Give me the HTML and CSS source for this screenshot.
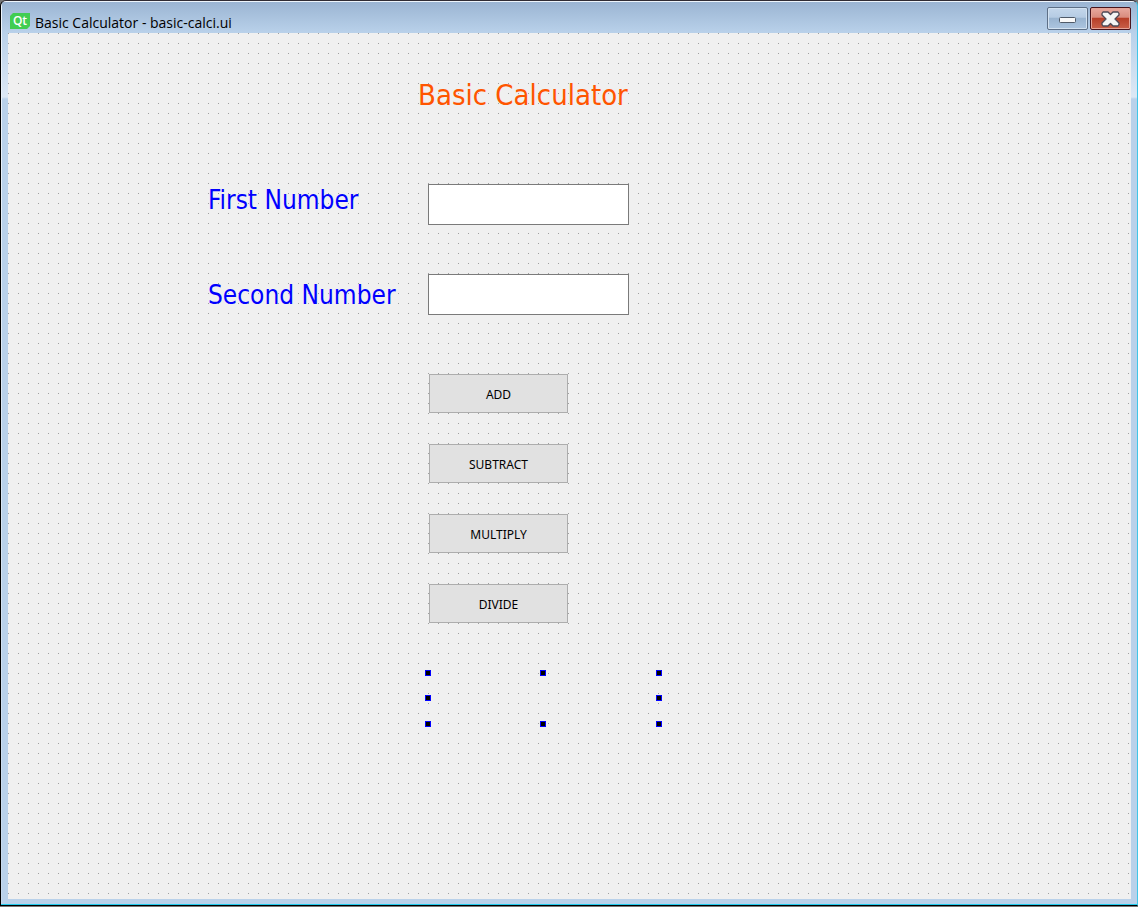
FILE: index.html
```html
<!DOCTYPE html>
<html lang="en">
<head>
<meta charset="utf-8">
<title>Basic Calculator - basic-calci.ui</title>
<link rel="stylesheet" href="styles.css">
</head>
<body>
<div class="window">
  <header class="titlebar">
    <span class="logo">Qt</span>
    <h1 class="caption">Basic Calculator - basic-calci.ui</h1>
    <div class="controls">
      <button class="control minimize" type="button" aria-label="Minimize">
        <svg width="17" height="6" viewBox="0 0 17 6"><rect x="0.500" y="0.500" width="16" height="5" rx="1" fill="#f8f8f8" stroke="#4f5a68"/></svg>
      </button>
      <button class="control close" type="button" aria-label="Close">
        <svg width="19" height="16" viewBox="0 0 19 16"><path d="M2 1H7L9.500 3.500L12 1H17L18 2.500V4L14 8L18 12V13.500L17 15H12L9.500 12.500L7 15H2L1 13.500V12L5 8L1 4V2.500Z" fill="#f4f4f4" stroke="#4d4855" stroke-width="1.300" stroke-linejoin="round"/></svg>
      </button>
    </div>
  </header>
  <main class="canvas">
    <form class="form">
      <h2 class="title">Basic Calculator</h2>
      <label class="label" for="first">First Number</label>
      <input class="field" id="first" type="text">
      <label class="label label-second" for="second">Second Number</label>
      <input class="field" id="second" type="text">
      <div class="actions">
        <button class="action" type="button">ADD</button>
        <button class="action" type="button">SUBTRACT</button>
        <button class="action" type="button">MULTIPLY</button>
        <button class="action" type="button">DIVIDE</button>
      </div>
      <output class="result">
        <i class="handle"></i><i class="handle"></i><i class="handle"></i>
        <i class="handle"></i><i class="handle handle-right"></i>
        <i class="handle"></i><i class="handle"></i><i class="handle"></i>
      </output>
    </form>
  </main>
</div>
</body>
</html>
```

FILE: styles.css
```css
* { box-sizing: border-box; }

body {
  margin: 0;
  background: #777;
  font-family: "Noto Sans", "Open Sans", sans-serif;
}

.window {
  display: flex;
  flex-direction: column;
  min-height: calc(100vh - 1px);
  padding: 0 6px 6px 7px;
  border: 1px solid #000;
  border-top-color: #302c34;
  border-right-color: #3fc5e8;
  border-radius: 6px 6px 0 0;
  background:
    linear-gradient(#22cbed, #22cbed) bottom / 100% 1px no-repeat,
    linear-gradient(#eef5fc, #c5d8ec) left / 1px 100% no-repeat,
    linear-gradient(#eef5fc, #eef5fc) top / 100% 1px no-repeat,
    linear-gradient(#9ab4d2, #b9d1ea 32px, #dce8f5 96px, #b9d1ea 98px);
}

.titlebar {
  display: flex;
  align-items: flex-start;
  height: 32px;
  padding-left: 2px;
}

.logo {
  width: 20px;
  height: 16px;
  margin-top: 12px;
  background: #41cd52;
  clip-path: polygon(3px 0, 100% 0, 100% 13px, 17px 100%, 0 100%, 0 3px);
  font: 600 12px/16px "Open Sans", sans-serif;
  color: #fff;
  text-align: center;
}

.caption {
  flex: 1;
  margin: 12px 0 0 5px;
  font: 14px/20px "Open Sans", "Noto Sans", sans-serif;
  color: #000;
}

.controls {
  display: flex;
  gap: 2px;
  margin-top: 6px;
}

.control {
  display: grid;
  place-items: center;
  width: 41px;
  height: 23px;
  padding: 0;
  border: 1px solid #5d6f86;
  border-radius: 2px;
  background: linear-gradient(#c4d7eb, #b5cbe3 45%, #98b3cf 46%, #adc6e0);
  box-shadow: inset 0 0 0 1px #d3e2f1;
}

.minimize svg { margin-top: 3px; }

.close {
  border-color: #48141c;
  background: linear-gradient(#e8a99f, #d98b7d 45%, #b63c25 46%, #c9614a);
  box-shadow: inset 0 0 0 1px #e5a497;
}

/* Designer grid: one dot every 10px in both directions. */
.canvas {
  flex: 1;
  background:
    linear-gradient(90deg, transparent 1px, #f0f0f0 1px) 0 0 / 10px 10px,
    linear-gradient(#a0a0a0 1px, #f0f0f0 1px) 0 0 / 10px 10px;
}

.form {
  display: grid;
  grid-template-columns: 220px 1fr;
  grid-template-rows: 151px 90px 100px auto auto;
  padding-left: 200px;
}

.title,
.label {
  font-family: "DejaVu Sans Condensed", "DejaVu Sans", sans-serif;
  font-weight: 400;
  line-height: 40px;
  white-space: nowrap;
}

.title {
  grid-column: 1 / -1;
  margin: 42px 0 0 210px;
  font-size: 29px;
  color: #ff5500;
}

.label {
  margin-top: -4px;
  font-size: 26px;
  color: #0000ff;
}

.label-second { margin-top: 1px; }

.field {
  width: 201px;
  height: 41px;
  padding: 0 6px;
  border: 1px solid #7a7a7a;
  border-radius: 0;
  background: #fff;
  font: inherit;
}

.actions {
  grid-column: 2;
  display: flex;
  flex-direction: column;
  align-items: flex-start;
  gap: 31px;
  padding-left: 1px;
}

.action {
  width: 139px;
  height: 39px;
  padding: 2px 0 0;
  border: 1px solid #adadad;
  border-radius: 0;
  background: #e1e1e1;
  font: 12px/16px "Noto Sans", sans-serif;
  color: #000;
}

.result {
  grid-column: 2;
  display: grid;
  grid-template-columns: 115px 116px 6px;
  grid-template-rows: 25px 26px 6px;
  justify-content: start;
  margin: 47px 0 0 -3px;
}

.handle {
  width: 6px;
  height: 6px;
  border: 1px solid #0000ff;
  background: #000;
}

.handle-right { grid-column: 3; }
```
